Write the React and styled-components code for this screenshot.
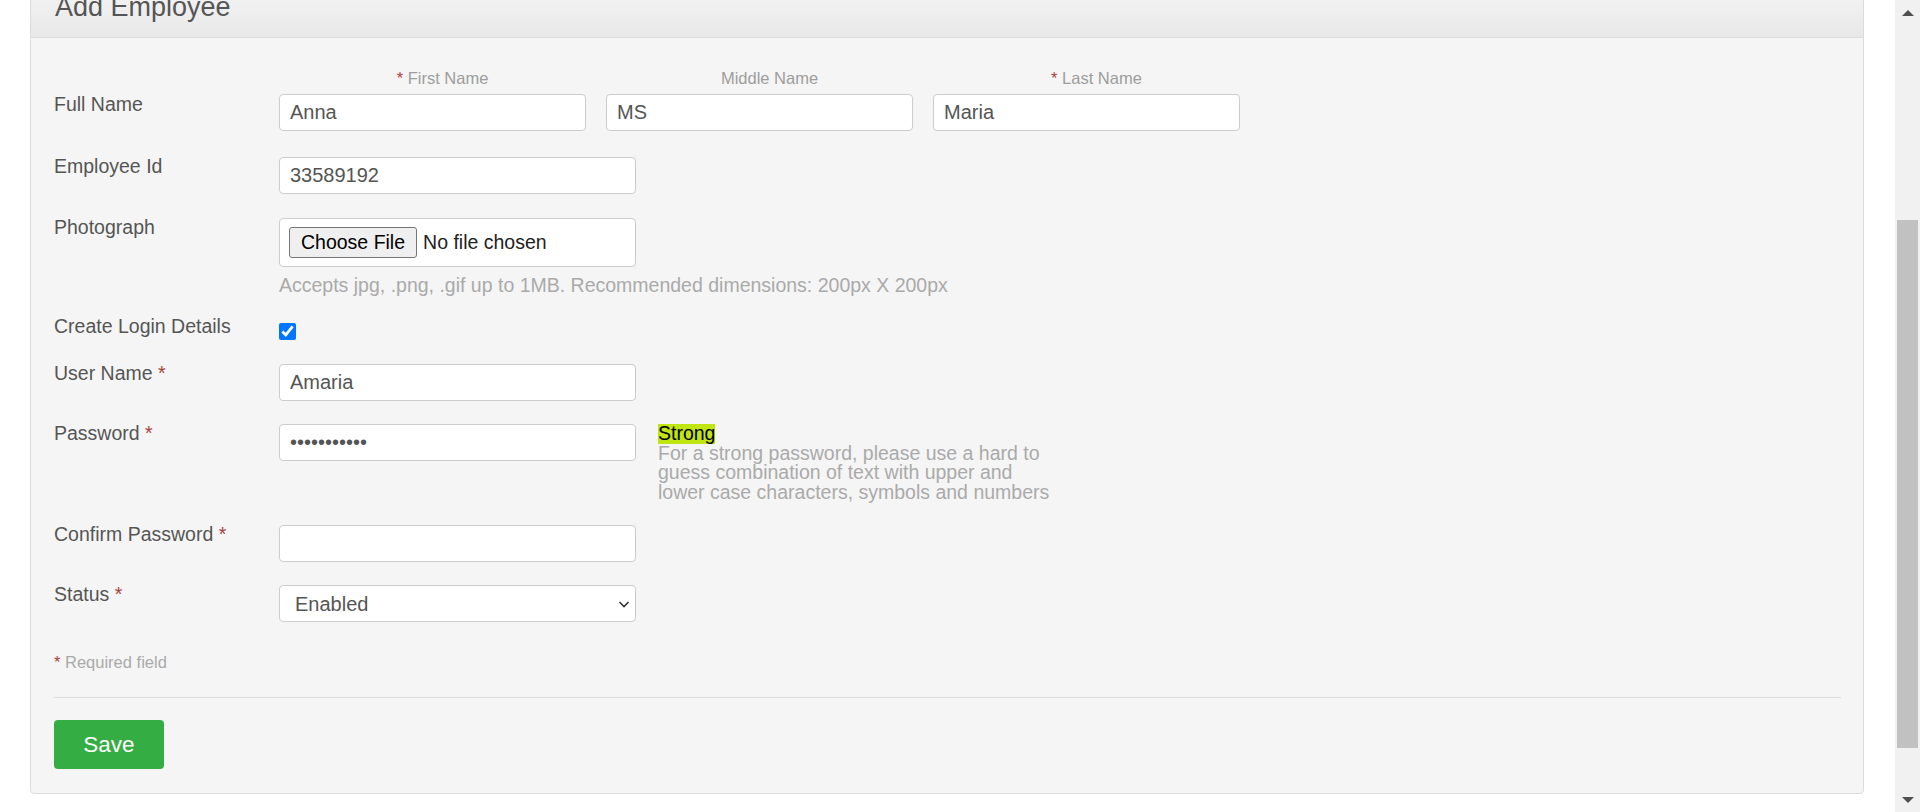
import React from "react";
import styled, { createGlobalStyle } from "styled-components";

const GlobalStyle = createGlobalStyle`
  html, body {
    margin: 0;
    padding: 0;
    background: #fff;
  }
  body, input, select, button {
    font-family: "Liberation Sans", Arial, Helvetica, sans-serif;
  }
`;

const Page = styled.div`
  display: flex;
  height: 100vh;
  overflow: hidden;
  background: #fff;
`;

const Main = styled.main`
  flex: 1;
  min-width: 0;
  padding: 0 31px 0 30px;
  overflow: hidden;
`;

const Card = styled.section`
  margin-top: -23px;
  border: 1px solid #dcdcdc;
  border-radius: 4px;
  background: #f5f5f5;
`;

const Header = styled.div`
  padding: 13px 24px;
  border-bottom: 1px solid #dcdcdc;
  border-radius: 4px 4px 0 0;
  background: linear-gradient(#f6f6f6, #e8e8e8);
`;

const Title = styled.h1`
  margin: 0;
  font-size: 27px;
  line-height: 33px;
  font-weight: normal;
  color: #555;
`;

const Body = styled.div`
  padding: 31px 22px 24px 23px;
`;

const Row = styled.div`
  display: flex;
  align-items: flex-start;
  margin-bottom: ${(p) => (p.$mb ?? 24)}px;
`;

const Label = styled.label`
  flex: none;
  width: 225px;
  margin-top: ${(p) => (p.$top ?? -3)}px;
  font-size: 19.5px;
  line-height: 24px;
  color: #555;
`;

const Req = styled.span`
  color: #a9423f;
`;

const Controls = styled.div`
  display: flex;
  flex-direction: column;
`;

const NameGroup = styled.div`
  display: flex;
  gap: 20px;
`;

const NameCol = styled.div`
  display: flex;
  flex-direction: column;
  width: 307px;
`;

const SubLabel = styled.div`
  margin: 0 -20px 7px 0;
  text-align: center;
  font-size: 16.5px;
  line-height: 18px;
  color: #9d9d9d;
`;

const Input = styled.input`
  box-sizing: border-box;
  width: ${(p) => p.$w || 357}px;
  height: 37px;
  margin: 0;
  padding: 0 10px;
  border: 1px solid #ccc;
  border-radius: 4px;
  background: #fff;
  font-size: 20px;
  color: #555;
  outline: none;
`;

const FileBox = styled.div`
  box-sizing: border-box;
  display: flex;
  align-items: center;
  width: 357px;
  height: 49px;
  padding: 0 9px;
  border: 1px solid #ccc;
  border-radius: 4px;
  background: #fff;
`;

const FileButton = styled.button`
  height: 31px;
  margin: 0 6px 0 0;
  padding: 0 11px;
  border: 1px solid #767676;
  border-radius: 3px;
  background: #efefef;
  color: #000;
  font-size: 19.5px;
`;

const FileText = styled.span`
  font-size: 19.5px;
  color: #222;
`;

const Help = styled.div`
  margin-top: 6px;
  font-size: 19.5px;
  line-height: 24px;
  color: #aaa;
`;

const Check = styled.input`
  width: 17px;
  height: 17px;
  margin: 6px 0 0;
  accent-color: #0075ff;
`;

const Strength = styled.div`
  width: 400px;
  margin-left: 22px;
  font-size: 19.5px;
  line-height: 19.5px;
  color: #aaa;
`;

const StrongTag = styled.span`
  display: inline-block;
  background: #c0e612;
  color: #000;
`;

const SelectWrap = styled.div`
  position: relative;
  width: 357px;
`;

const Select = styled.select`
  box-sizing: border-box;
  appearance: none;
  width: 100%;
  height: 37px;
  margin: 0;
  padding: 0 15px;
  border: 1px solid #ccc;
  border-radius: 4px;
  background: #fff;
  font-size: 20px;
  color: #555;
  outline: none;
`;

const Chevron = styled.svg`
  position: absolute;
  right: 6px;
  top: 13px;
  pointer-events: none;
`;

const Required = styled.div`
  margin-top: 31px;
  font-size: 16.5px;
  line-height: 18px;
  color: #aaa;
`;

const Divider = styled.hr`
  margin: 26px 0 22px;
  border: 0;
  border-top: 1px solid #dcdcdc;
`;

const SaveButton = styled.button`
  width: 110px;
  height: 49px;
  border: 0;
  border-radius: 4px;
  background: #34ad43;
  color: #fff;
  font-size: 22.5px;
  cursor: pointer;
`;

const ScrollTrack = styled.div`
  flex: none;
  display: flex;
  flex-direction: column;
  align-items: center;
  width: 25px;
  background: #f1f1f1;
`;

const ArrowBox = styled.div`
  display: flex;
  align-items: center;
  justify-content: center;
  width: 100%;
  height: 25px;
  margin-top: ${(p) => (p.$down ? "auto" : "0")};
`;

const Triangle = styled.div`
  width: 0;
  height: 0;
  border-left: 6px solid transparent;
  border-right: 6px solid transparent;
  ${(p) =>
    p.$down
      ? "border-top: 6px solid #505050;"
      : "border-bottom: 6px solid #505050;"}
`;

const Thumb = styled.div`
  width: 21px;
  height: 528px;
  margin-top: 195px;
  background: #c1c1c1;
`;

export default function App() {
  return (
    <>
      <GlobalStyle />
      <Page>
        <Main>
          <Card>
            <Header>
              <Title>Add Employee</Title>
            </Header>
            <Body>
              <Row $mb={26}>
                <Label $top={23}>Full Name</Label>
                <NameGroup>
                  <NameCol>
                    <SubLabel>
                      <Req>*</Req> First Name
                    </SubLabel>
                    <Input $w={307} defaultValue="Anna" />
                  </NameCol>
                  <NameCol>
                    <SubLabel>Middle Name</SubLabel>
                    <Input $w={307} defaultValue="MS" />
                  </NameCol>
                  <NameCol>
                    <SubLabel>
                      <Req>*</Req> Last Name
                    </SubLabel>
                    <Input $w={307} defaultValue="Maria" />
                  </NameCol>
                </NameGroup>
              </Row>

              <Row>
                <Label>Employee Id</Label>
                <Input defaultValue="33589192" />
              </Row>

              <Row $mb={20}>
                <Label>Photograph</Label>
                <Controls>
                  <FileBox>
                    <FileButton type="button">Choose File</FileButton>
                    <FileText>No file chosen</FileText>
                  </FileBox>
                  <Help>
                    Accepts jpg, .png, .gif up to 1MB. Recommended dimensions:
                    200px X 200px
                  </Help>
                </Controls>
              </Row>

              <Row>
                <Label>Create Login Details</Label>
                <Check type="checkbox" defaultChecked />
              </Row>

              <Row $mb={23}>
                <Label>
                  User Name <Req>*</Req>
                </Label>
                <Input defaultValue="Amaria" />
              </Row>

              <Row $mb={23}>
                <Label>
                  Password <Req>*</Req>
                </Label>
                <Input type="password" defaultValue="Amaria123!!" />
                <Strength>
                  <StrongTag>Strong</StrongTag>
                  <div>
                    For a strong password, please use a hard to guess
                    combination of text with upper and lower case characters,
                    symbols and numbers
                  </div>
                </Strength>
              </Row>

              <Row $mb={23}>
                <Label>
                  Confirm Password <Req>*</Req>
                </Label>
                <Input type="password" defaultValue="" />
              </Row>

              <Row $mb={0}>
                <Label>
                  Status <Req>*</Req>
                </Label>
                <SelectWrap>
                  <Select defaultValue="Enabled">
                    <option>Enabled</option>
                    <option>Disabled</option>
                  </Select>
                  <Chevron width="12" height="12" viewBox="0 0 12 12">
                    <path
                      d="M1.5 4 L6 8.5 L10.5 4"
                      fill="none"
                      stroke="#333"
                      strokeWidth="1.6"
                    />
                  </Chevron>
                </SelectWrap>
              </Row>

              <Required>
                <Req>*</Req> Required field
              </Required>
              <Divider />
              <SaveButton type="button">Save</SaveButton>
            </Body>
          </Card>
        </Main>
        <ScrollTrack>
          <ArrowBox>
            <Triangle />
          </ArrowBox>
          <Thumb />
          <ArrowBox $down>
            <Triangle $down />
          </ArrowBox>
        </ScrollTrack>
      </Page>
    </>
  );
}
